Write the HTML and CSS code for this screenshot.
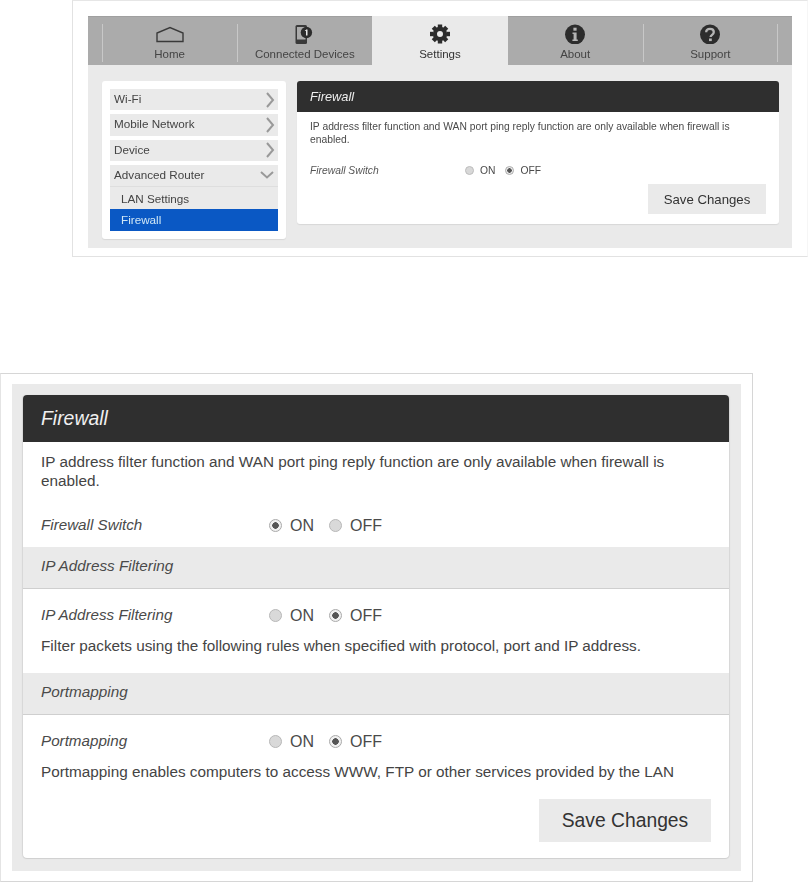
FILE: index.html
```html
<!DOCTYPE html>
<html lang="en">
<head>
<meta charset="utf-8">
<title>Firewall</title>
<link rel="stylesheet" href="styles.css">
</head>
<body>
<section class="shot">
  <div class="shell">
    <nav class="tabs">
      <a class="tab"><svg class="ico" width="30" height="20" viewBox="0 0 30 20"><path d="M2 17.500V9L15 3.500l13 5.500v8.500z" fill="none" stroke="#3a3a3a" stroke-width="1.400"/></svg><span>Home</span></a>
      <a class="tab"><svg class="ico" width="30" height="20" viewBox="0 0 30 20"><rect x="5.500" y="1" width="11.500" height="19" rx="1.500" fill="#3a3a3a"/><rect x="7" y="3" width="8.500" height="12.500" fill="#ababab"/><circle cx="16.400" cy="8.500" r="5.700" fill="#2c2c2c"/><path d="M16 5.500h1.500v6H16zM14.700 6.900l1.500-1.400v1.400z" fill="#e8e8e8"/></svg><span>Connected Devices</span></a>
      <a class="tab tab-on"><svg class="ico" width="30" height="20" viewBox="0 0 30 20"><g fill="#2c2c2c"><path d="M15 2.800a7.200 7.200 0 1 0 0 14.400a7.200 7.200 0 0 0 0-14.400zm0 4.200a3 3 0 1 1 0 6a3 3 0 0 1 0-6z" fill-rule="evenodd"/><rect x="12.800" y="0.500" width="4.400" height="3.500"/><rect x="12.800" y="16" width="4.400" height="3.500"/><rect x="5" y="7.800" width="3.500" height="4.400"/><rect x="21.500" y="7.800" width="3.500" height="4.400"/><rect x="12.800" y="0.500" width="4.400" height="3.500" transform="rotate(45 15 10)"/><rect x="12.800" y="0.500" width="4.400" height="3.500" transform="rotate(135 15 10)"/><rect x="12.800" y="0.500" width="4.400" height="3.500" transform="rotate(225 15 10)"/><rect x="12.800" y="0.500" width="4.400" height="3.500" transform="rotate(315 15 10)"/></g></svg><span>Settings</span></a>
      <a class="tab"><svg class="ico" width="30" height="20" viewBox="0 0 30 20"><circle cx="15" cy="10.500" r="10" fill="#2c2c2c"/><rect x="13.400" y="3.700" width="3.200" height="3" fill="#b4b4b4"/><path d="M12.500 8.500h4.100v7h1.200v1.600h-5.400v-1.600h1.200V10.100h-1.100z" fill="#b4b4b4"/></svg><span>About</span></a>
      <a class="tab tab-last"><svg class="ico" width="30" height="20" viewBox="0 0 30 20"><circle cx="15" cy="10.500" r="10" fill="#2c2c2c"/><path d="M11.200 8.300c0-2.200 1.700-3.400 3.800-3.400s3.800 1.200 3.800 3.200c0 2.800-3.200 2.700-3.200 5" fill="none" stroke="#b4b4b4" stroke-width="2.300"/><rect x="14" y="14.500" width="2.800" height="2.600" fill="#b4b4b4"/></svg><span>Support</span></a>
    </nav>
    <div class="settings">
      <aside class="side">
        <div class="menu"><span>Wi-Fi</span><svg width="10" height="16" viewBox="0 0 10 16"><path d="M2 1l6 7-6 7" fill="none" stroke="#999" stroke-width="2"/></svg></div>
        <div class="menu"><span>Mobile Network</span><svg width="10" height="16" viewBox="0 0 10 16"><path d="M2 1l6 7-6 7" fill="none" stroke="#999" stroke-width="2"/></svg></div>
        <div class="menu"><span>Device</span><svg width="10" height="16" viewBox="0 0 10 16"><path d="M2 1l6 7-6 7" fill="none" stroke="#999" stroke-width="2"/></svg></div>
        <div class="group">
          <div class="menu menu-open"><span>Advanced Router</span><svg width="14" height="8" viewBox="0 0 14 8"><path d="M1 1l6 5.500L13 1" fill="none" stroke="#999" stroke-width="2"/></svg></div>
          <div class="sub">LAN Settings</div>
          <div class="sub sub-on">Firewall</div>
        </div>
      </aside>
      <main class="mini">
        <h2 class="mini-head">Firewall</h2>
        <p class="mini-text">IP address filter function and WAN port ping reply function are only available when firewall is enabled.</p>
        <div class="mini-row">
          <em class="mini-label">Firewall Switch</em>
          <span class="radio"></span><span class="mini-opt">ON</span>
          <span class="radio radio-on"></span><span class="mini-opt">OFF</span>
        </div>
        <div class="mini-foot"><button class="mini-btn">Save Changes</button></div>
      </main>
    </div>
  </div>
</section>

<section class="shot-big">
  <div class="big-shell">
    <div class="card">
      <h1 class="card-head">Firewall</h1>
      <p class="para para-top">IP address filter function and WAN port ping reply function are only available when firewall is enabled.</p>
      <div class="row row-first">
        <em class="label">Firewall Switch</em>
        <span class="dot dot-on"></span><span class="opt">ON</span>
        <span class="dot"></span><span class="opt">OFF</span>
      </div>
      <div class="band">IP Address Filtering</div>
      <div class="row">
        <em class="label">IP Address Filtering</em>
        <span class="dot"></span><span class="opt">ON</span>
        <span class="dot dot-on"></span><span class="opt">OFF</span>
      </div>
      <p class="para para-rule">Filter packets using the following rules when specified with protocol, port and IP address.</p>
      <div class="band">Portmapping</div>
      <div class="row">
        <em class="label">Portmapping</em>
        <span class="dot"></span><span class="opt">ON</span>
        <span class="dot dot-on"></span><span class="opt">OFF</span>
      </div>
      <p class="para para-rule">Portmapping enables computers to access WWW, FTP or other services provided by the LAN</p>
      <div class="foot"><button class="save">Save Changes</button></div>
    </div>
  </div>
</section>
</body>
</html>
```
FILE: styles.css
```css
* { box-sizing: border-box; }
html, body { margin: 0; padding: 0; background: #fff; }
body { font-family: "Liberation Sans", Arial, sans-serif; color: #3c3c3c; height: 883px; overflow: hidden; }

.shot { margin-left: 72px; width: 736px; height: 257px; border: 1px solid #e2e2e2; border-top-color: #e6e6e6; border-right-color: #f6f6f6; padding: 15px 7px 7px 15px; filter: blur(0.35px); }
.shell { width: 704px; height: 232px; background: #eaeaea; }
.tabs { display: grid; grid-template-columns: repeat(5, 135.2px); height: 49px; padding-left: 14px; margin: 0; background: #ababab; border-top: 1px solid #a0a0a0; width: 704px; }
.tab { position: relative; display: flex; flex-direction: column; align-items: center; padding-top: 7px; font-size: 11.500px; color: #444; height: 48px; }
.tab span { margin-top: 3px; line-height: 14px; white-space: nowrap; }
.tab::before { content: ""; position: absolute; left: 0; top: 7px; bottom: 3px; width: 1px; background: #c8c8c8; }
.tab-last::after { content: ""; position: absolute; right: 0; top: 7px; bottom: 3px; width: 1px; background: #c8c8c8; }
.tab-on { background: #eaeaea; margin-top: -1px; height: 49px; padding-top: 8px; color: #333; }
.tab-on::before, .tab-on + .tab::before { display: none; }
.ico { display: block; }

.settings { display: flex; gap: 11px; padding: 16px 13px 0 14px; align-items: flex-start; }
.side { width: 184px; height: 158px; background: #fff; border-radius: 3px; padding: 8px; display: flex; flex-direction: column; gap: 4px; box-shadow: 0 1px 1px #d8d8d8; }
.menu { height: 22px; background: #eaeaea; display: flex; justify-content: space-between; align-items: center; padding: 0 3px 0 4px; font-size: 11.700px; color: #444; }
.menu span { margin-bottom: 2px; }
.group { background: #eaeaea; }
.menu-open { border-bottom: 1px solid #dedede; padding-right: 4px; height: 22px; }
.sub { height: 22px; line-height: 23px; padding-left: 11px; font-size: 11.700px; color: #444; }
.sub-on { background: #0a58c4; color: #cfe6f5; line-height: 22px; }

.mini { width: 482px; height: 143px; background: #fff; border-radius: 3px; box-shadow: 0 1px 1px #d8d8d8; }
.mini-head { margin: 0; height: 31px; background: #2f2f2f; border-radius: 3px 3px 0 0; color: #eee; font-size: 12.800px; font-weight: normal; font-style: italic; line-height: 31px; padding-left: 13px; }
.mini-text { margin: 0; padding: 8px 13px 0; font-size: 10.300px; line-height: 13px; color: #4a4a4a; }
.mini-row { display: flex; align-items: center; padding: 12px 13px 0; height: 36px; font-size: 10.300px; color: #4a4a4a; }
.mini-label { width: 155px; color: #555; }
.radio { width: 9px; height: 9px; border-radius: 50%; background: #d8d8d8; border: 1px solid #bdbdbd; margin-right: 6px; }
.radio-on { background: radial-gradient(circle, #555 0 2px, #eee 2.500px); border-color: #aaa; }
.mini-opt { margin-right: 10px; }
.mini-foot { display: flex; justify-content: flex-end; padding: 2px 13px 0 0; }
.mini-btn { width: 118px; height: 30px; border: 0; background: #eaeaea; color: #333; font: 13.200px "Liberation Sans", Arial, sans-serif; padding: 0; }

.shot-big { margin-top: 116px; width: 753px; height: 509px; border: 1px solid #d6d6d6; border-left-color: #e4e4e4; padding: 10px 10px 10px 11px; }
.big-shell { width: 729px; height: 487px; background: #eaeaea; padding: 11px; }
.card { width: 706px; height: 463px; background: #fff; border-radius: 4px; box-shadow: 0 1px 1px #cfcfcf, 1px 0 1px #d8d8d8, -1px 0 1px #d8d8d8; }
.card-head { margin: 0; height: 47px; background: #2f2f2f; border-radius: 4px 4px 0 0; color: #f0f0f0; font-size: 19.400px; font-weight: normal; font-style: italic; line-height: 46px; padding-left: 18px; }
.para { margin: 0; padding: 0 18px; font-size: 15.300px; line-height: 19px; color: #444; }
.para-top { padding-top: 10px; }
.para-rule { padding-top: 5px; height: 42px; }
.row { display: flex; align-items: center; height: 42px; padding: 10px 18px 0; font-size: 15.200px; }
.row-first { height: 57px; padding-top: 13px; }
.label { width: 228px; color: #4a4a4a; margin-top: -1px; }
.dot { width: 13px; height: 13px; border-radius: 50%; background: #d9d9d9; border: 1px solid #b8b8b8; margin-right: 8px; }
.dot-on { background: radial-gradient(circle, #555 0 3px, #f0f0f0 3.500px); border-color: #aaa; }
.opt { margin-right: 15px; font-size: 16px; color: #4a4a4a; margin-top: 1px; }
.band { height: 42px; line-height: 37px; background: #eaeaea; border-bottom: 1px solid #cfcfcf; padding-left: 18px; font-size: 15.300px; font-style: italic; color: #4a4a4a; }
.foot { display: flex; justify-content: flex-end; padding-right: 18px; }
.save { width: 172px; height: 43px; border: 0; background: #eaeaea; color: #333; font: 19.300px "Liberation Sans", Arial, sans-serif; padding: 0; }
```
